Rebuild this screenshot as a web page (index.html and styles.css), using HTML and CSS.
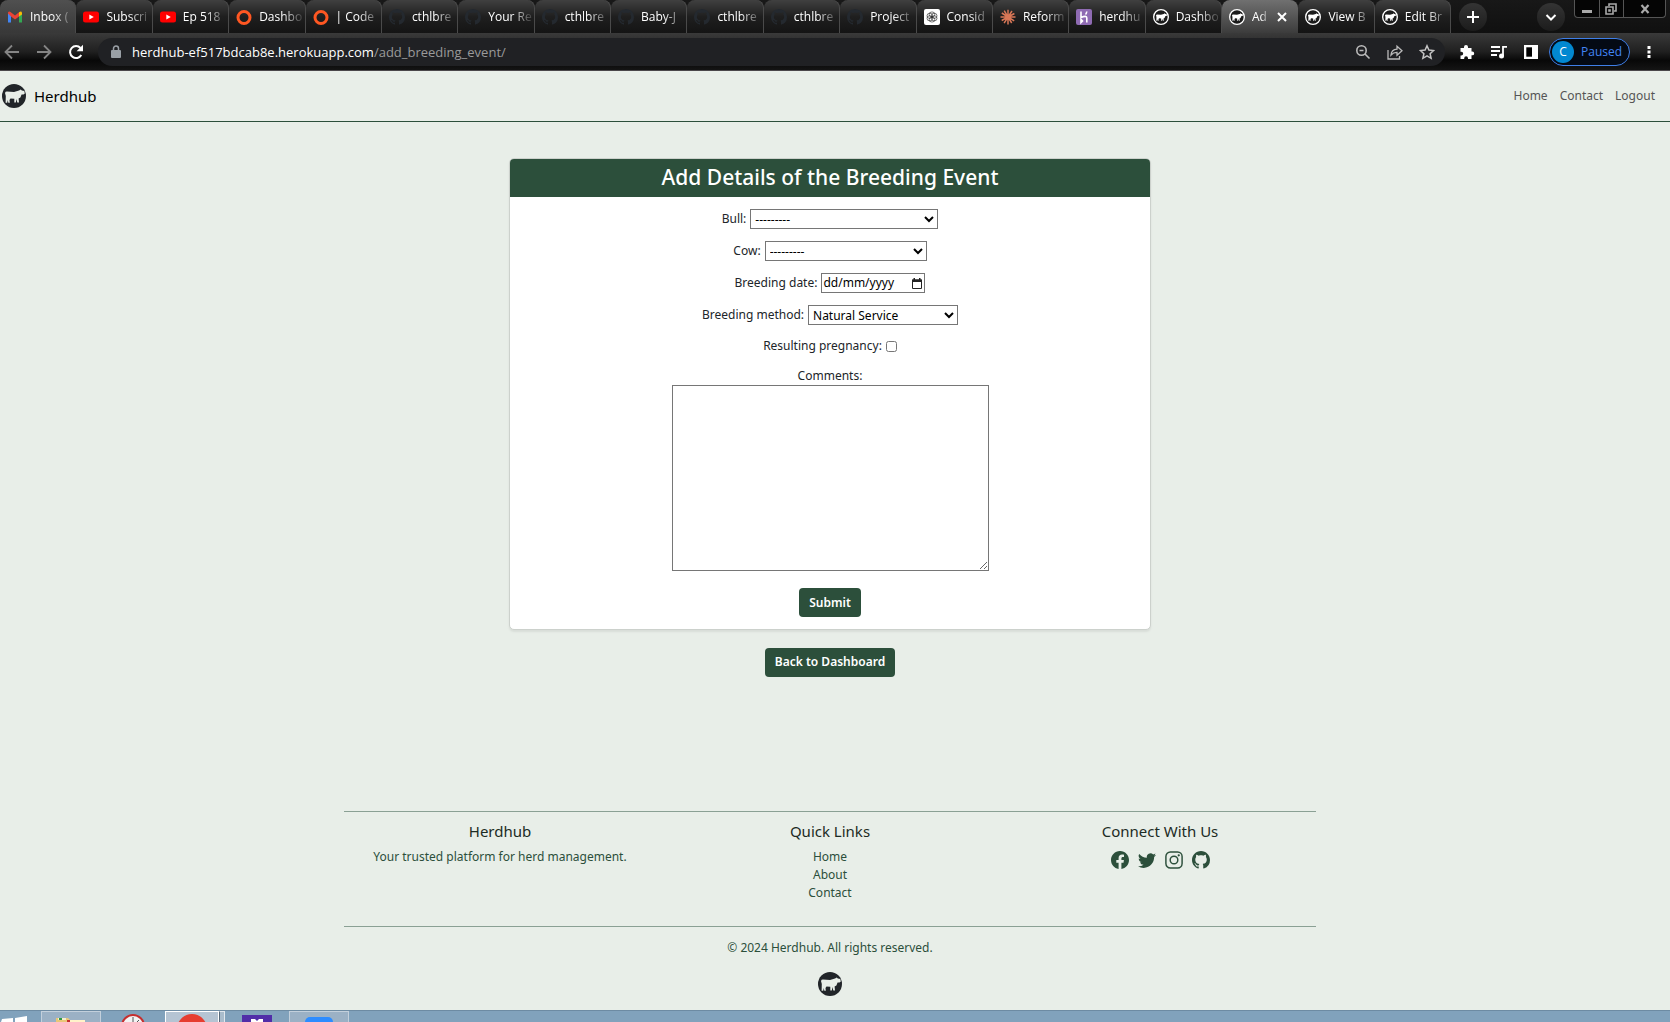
FILE: index.html
```html
<!DOCTYPE html>
<html lang="en-GB">
<head>
<meta charset="utf-8">
<meta name="viewport" content="width=device-width, initial-scale=1">
<title>Add Breeding Event</title>
<link rel="stylesheet" href="styles.css">
</head>
<body>
<svg class="sprite" aria-hidden="true">
  <symbol id="cow" viewBox="0 0 24 24"><path d="M3 9Q3.300 7.600 5 7.600L12 8 17 6.600 18.800 5.400 19.800 6.400 22.300 7 22.800 9.400 21.500 10.400 19.600 10.600 18.400 13.600 16.600 14.600 17 18.600H15.300L14.500 15 13.800 18.600H12.300V14.700L8.500 14.400 7.500 16 7.800 18.800H6.300L5.800 16 5.200 18.800H3.600L3.800 12Z"/></symbol>
  <symbol id="logo" viewBox="0 0 24 24"><circle cx="12" cy="12" r="12" fill="#212529"/><use href="#cow" fill="#e8eee8"/></symbol>
  <symbol id="tab-cow" viewBox="0 0 24 24"><circle cx="12" cy="12" r="11" fill="#1b1b1b" stroke="#fff" stroke-width="2"/><use href="#cow" x="2" y="2" width="20" height="20" fill="#fff"/></symbol>
  <symbol id="github" viewBox="0 0 16 16"><path d="M8 0C3.58 0 0 3.58 0 8c0 3.54 2.29 6.53 5.47 7.59.4.07.55-.17.55-.38 0-.19-.01-.82-.01-1.49-2.01.37-2.53-.49-2.69-.94-.09-.23-.48-.94-.82-1.13-.28-.15-.68-.52-.01-.53.63-.01 1.08.58 1.23.82.72 1.21 1.87.87 2.33.66.07-.52.28-.87.51-1.07-1.78-.2-3.64-.89-3.64-3.95 0-.87.31-1.59.82-2.15-.08-.2-.36-1.02.08-2.12 0 0 .67-.21 2.2.82.64-.18 1.32-.27 2-.27s1.36.09 2 .27c1.53-1.04 2.2-.82 2.2-.82.44 1.1.16 1.92.08 2.12.51.56.82 1.27.82 2.15 0 3.07-1.87 3.75-3.65 3.95.29.25.54.73.54 1.48 0 1.07-.01 1.93-.01 2.2 0 .21.15.46.55.38A8.01 8.01 0 0 0 16 8c0-4.42-3.58-8-8-8z"/></symbol>
  <symbol id="gmail" viewBox="0 0 16 16"><path d="M1 13.500V4l3 2v7.500z" fill="#4285f4"/><path d="M12 13.500V6l3-2v9.500z" fill="#34a853"/><path d="M1 4.500V3.500Q2 2 3.500 3L8 6.500 12 3.300V7.500L8 10.500 4 7.500z" fill="#ea4335"/><path d="M12 3.300Q14.500 1.500 15 4v1.500l-3 2z" fill="#fbbc04"/></symbol>
  <symbol id="youtube" viewBox="0 0 16 16"><rect y="2.500" width="16" height="11" rx="2.500" fill="#f00"/><path d="M6.300 5.500v5L10.800 8z" fill="#fff"/></symbol>
  <symbol id="ring" viewBox="0 0 16 16"><circle cx="8" cy="8.500" r="6" fill="none" stroke="#ff5722" stroke-width="3"/></symbol>
  <symbol id="gpt" viewBox="0 0 16 16"><rect width="16" height="16" rx="2" fill="#fff"/><g fill="none" stroke="#222" stroke-width=".6"><ellipse cx="8" cy="5.500" rx="2.800" ry="2.600"/><ellipse cx="10.200" cy="6.800" rx="2.800" ry="2.600"/><ellipse cx="10.200" cy="9.300" rx="2.800" ry="2.600"/><ellipse cx="8" cy="10.500" rx="2.800" ry="2.600"/><ellipse cx="5.800" cy="9.300" rx="2.800" ry="2.600"/><ellipse cx="5.800" cy="6.800" rx="2.800" ry="2.600"/></g></symbol>
  <symbol id="claude" viewBox="0 0 16 16"><path d="M8 8V.8M8 8V15.500M8 8H.5M8 8H15.500M8 8L4.200 1.700M8 8l4-6M8 8l6.400-3.500M8 8l6.200 3.800M8 8l3.700 6M8 8l-3.900 6.200M8 8l-6.300 3.500M8 8L1.800 4" stroke="#d97757" stroke-width="1.500"/></symbol>
  <symbol id="heroku" viewBox="0 0 16 16"><rect width="16" height="16" rx="2" fill="#8f6bb3"/><path d="M5 2.500V8.500Q10.800 6 10.800 9V13.500M10.800 2.500Q10.500 4.500 9.500 5.500M5 10.500v3l1.500-1.500z" fill="none" stroke="#fff" stroke-width="1.600"/></symbol>
</svg>

<header class="browser">
  <div class="tab-strip">
    <nav class="tabs" aria-label="Open tabs">
      <a class="tab tab-pinned" href="#"><svg class="favicon"><use href="#gmail"/></svg><span class="tab-title">Inbox (</span></a>
      <a class="tab" href="#"><svg class="favicon"><use href="#youtube"/></svg><span class="tab-title">Subscri</span></a>
      <a class="tab" href="#"><svg class="favicon"><use href="#youtube"/></svg><span class="tab-title">Ep 518</span></a>
      <a class="tab" href="#"><svg class="favicon"><use href="#ring"/></svg><span class="tab-title">Dashbo</span></a>
      <a class="tab" href="#"><svg class="favicon"><use href="#ring"/></svg><span class="tab-title">| Code</span></a>
      <a class="tab" href="#"><svg class="favicon favicon-dim"><use href="#github"/></svg><span class="tab-title">cthlbre</span></a>
      <a class="tab" href="#"><svg class="favicon favicon-dim"><use href="#github"/></svg><span class="tab-title">Your Re</span></a>
      <a class="tab" href="#"><svg class="favicon favicon-dim"><use href="#github"/></svg><span class="tab-title">cthlbre</span></a>
      <a class="tab" href="#"><svg class="favicon favicon-dim"><use href="#github"/></svg><span class="tab-title">Baby-J</span></a>
      <a class="tab" href="#"><svg class="favicon favicon-dim"><use href="#github"/></svg><span class="tab-title">cthlbre</span></a>
      <a class="tab" href="#"><svg class="favicon favicon-dim"><use href="#github"/></svg><span class="tab-title">cthlbre</span></a>
      <a class="tab" href="#"><svg class="favicon favicon-dim"><use href="#github"/></svg><span class="tab-title">Project</span></a>
      <a class="tab" href="#"><svg class="favicon"><use href="#gpt"/></svg><span class="tab-title">Consid</span></a>
      <a class="tab" href="#"><svg class="favicon"><use href="#claude"/></svg><span class="tab-title">Reform</span></a>
      <a class="tab" href="#"><svg class="favicon"><use href="#heroku"/></svg><span class="tab-title">herdhu</span></a>
      <a class="tab" href="#"><svg class="favicon"><use href="#tab-cow"/></svg><span class="tab-title">Dashbo</span></a>
      <a class="tab tab-active" href="#" aria-current="page"><svg class="favicon"><use href="#tab-cow"/></svg><span class="tab-title">Ad</span><svg class="tab-close" viewBox="0 0 10 10"><path d="M1 1l8 8M9 1L1 9" stroke="#fff" stroke-width="2"/></svg></a>
      <a class="tab" href="#"><svg class="favicon"><use href="#tab-cow"/></svg><span class="tab-title">View B</span></a>
      <a class="tab" href="#"><svg class="favicon"><use href="#tab-cow"/></svg><span class="tab-title">Edit Br</span></a>
    </nav>
    <div class="strip-tools">
      <button class="round-btn" aria-label="New tab"><svg width="12" height="12" viewBox="0 0 12 12"><path d="M6 0v12M0 6h12" stroke="#fff" stroke-width="2"/></svg></button>
      <button class="round-btn" aria-label="Search tabs"><svg width="12" height="12" viewBox="0 0 12 12"><path d="M1.500 4L6 8.500 10.500 4" fill="none" stroke="#fff" stroke-width="2"/></svg></button>
    </div>
    <div class="window-controls">
      <button class="win-btn" aria-label="Minimise"><svg width="12" height="12" viewBox="0 0 12 12"><path d="M1 8.500h10" stroke="#a9a9a9" stroke-width="3"/></svg></button>
      <button class="win-btn" aria-label="Restore"><svg width="12" height="12" viewBox="0 0 12 12"><path d="M4 3V1h7v7H9M1 4h7v7H1zM4 7h1v1H4z" fill="none" stroke="#a9a9a9" stroke-width="1.600"/></svg></button>
      <button class="win-btn win-close" aria-label="Close"><svg width="12" height="12" viewBox="0 0 12 12"><path d="M2.500 2l7 8M9.500 2l-7 8" stroke="#a9a9a9" stroke-width="2.200"/></svg></button>
    </div>
  </div>
  <div class="toolbar">
    <div class="nav-buttons">
      <button class="icon-btn" aria-label="Back"><svg width="16" height="16" viewBox="0 0 16 16"><path d="M15 8H2M8 1.500L1.500 8 8 14.500" fill="none" stroke="#858585" stroke-width="1.800"/></svg></button>
      <button class="icon-btn" aria-label="Forward"><svg width="16" height="16" viewBox="0 0 16 16"><path d="M1 8h13M8 1.500L14.500 8 8 14.500" fill="none" stroke="#858585" stroke-width="1.800"/></svg></button>
      <button class="icon-btn" aria-label="Reload"><svg width="16" height="16" viewBox="0 0 16 16"><path d="M13.300 11A6 6 0 1 1 12.500 4" fill="none" stroke="#fff" stroke-width="2"/><path d="M15 .8V7.200H8.600z" fill="#fff"/></svg></button>
    </div>
    <div class="omnibox">
      <svg width="10" height="14" viewBox="0 0 10 14"><path d="M1 5h8q1 0 1 1v6q0 1-1 1H1q-1 0-1-1V6q0-1 1-1z" fill="#9aa0a6"/><path d="M2.500 5.500V3.500a2.500 2.500 0 0 1 5 0v2" fill="none" stroke="#9aa0a6" stroke-width="1.500"/></svg>
      <span class="url">herdhub-ef517bdcab8e.herokuapp.com<span class="url-path">/add_breeding_event/</span></span>
      <button class="icon-btn" aria-label="Zoom"><svg width="16" height="16" viewBox="0 0 16 16"><circle cx="6.500" cy="6.500" r="4.700" fill="none" stroke="#bbb" stroke-width="1.600"/><path d="M10 10l4.500 4.500M4.500 6.500h4" stroke="#bbb" stroke-width="1.600"/></svg></button>
      <button class="icon-btn" aria-label="Share"><svg width="16" height="16" viewBox="0 0 16 16"><path d="M1 6v9h11.500v-3M4 11q.5-5.500 6-5.800V2.200L15 6.800 10 11.200V8.300Q6.500 8.200 4 11z" fill="none" stroke="#bbb" stroke-width="1.300"/></svg></button>
      <button class="icon-btn" aria-label="Bookmark"><svg width="16" height="16" viewBox="0 0 16 16"><path d="M8 1.800l1.900 4.300 4.700.5-3.500 3.100 1 4.600L8 11.900l-4.100 2.400 1-4.600L1.400 6.600l4.700-.5z" fill="none" stroke="#c4c4c4" stroke-width="1.500"/></svg></button>
    </div>
    <div class="tool-icons">
      <button class="icon-btn" aria-label="Extensions"><svg width="16" height="16" viewBox="0 0 16 16"><path d="M1.500 4H5V3a2 2 0 0 1 4 0v1h3.500v3.500h.8a1.900 1.900 0 0 1 0 3.800h-.8V15H9v-.8a1.900 1.900 0 0 0-3.800 0v.8H1.500v-3.500h.8a1.900 1.900 0 0 0 0-3.800h-.8z" fill="#fff"/></svg></button>
      <button class="icon-btn" aria-label="Media"><svg width="18" height="16" viewBox="0 0 18 16"><path d="M1 3h9M1 7h9M1 11h6M13 12V2.800h4" fill="none" stroke="#fff" stroke-width="1.800"/><circle cx="11.500" cy="12" r="2.500" fill="#fff"/></svg></button>
      <button class="icon-btn" aria-label="Side panel"><svg width="16" height="16" viewBox="0 0 16 16"><path d="M1 1h14v14H1z" fill="#fff"/><path d="M3.300 3.300H9v9.400H3.300z" fill="#000"/></svg></button>
    </div>
    <button class="profile"><span class="avatar">C</span>Paused</button>
    <button class="icon-btn" aria-label="Menu"><svg width="4" height="14" viewBox="0 0 4 14"><path d="M.5 1h3v3h-3zM.5 5.500h3v3h-3zM.5 10h3v3h-3z" fill="#fff"/></svg></button>
  </div>
</header>

<div class="page">
  <nav class="navbar">
    <a class="brand" href="#"><svg class="logo"><use href="#logo"/></svg>Herdhub</a>
    <div class="nav-links"><a href="#">Home</a><a href="#">Contact</a><a href="#">Logout</a></div>
  </nav>

  <main class="main">
    <section class="card">
      <h1 class="card-title">Add Details of the Breeding Event</h1>
      <form class="card-body">
        <div class="field"><label for="bull">Bull:</label><select class="control bull" id="bull"><option>---------</option></select></div>
        <div class="field"><label for="cow-select">Cow:</label><select class="control cow" id="cow-select"><option>---------</option></select></div>
        <div class="field"><label for="date">Breeding date:</label><span class="control date"><input id="date" type="text" placeholder="dd/mm/yyyy"><button class="date-btn" type="button" aria-label="Choose date"><svg width="10" height="11" viewBox="0 0 10 11"><path d="M.5 2h9v8.500h-9z" fill="none" stroke="#222"/><path d="M0 1.500h10V4H0zM1.500 0h1.500v2H1.500zM7 0h1.500v2H7z" fill="#222"/></svg></button></span></div>
        <div class="field"><label for="method">Breeding method:</label><select class="control method" id="method"><option>Natural Service</option></select></div>
        <div class="field field-check"><label for="pregnancy">Resulting pregnancy:</label><input class="check" id="pregnancy" type="checkbox"></div>
        <div class="field-area"><label for="comments">Comments:</label><textarea class="comments" id="comments"></textarea></div>
        <button class="btn" type="submit">Submit</button>
      </form>
    </section>
    <a class="btn" href="#">Back to Dashboard</a>
  </main>

  <footer class="footer">
    <div class="footer-cols">
      <section><h2>Herdhub</h2><p>Your trusted platform for herd management.</p></section>
      <section><h2>Quick Links</h2><ul><li><a href="#">Home</a></li><li><a href="#">About</a></li><li><a href="#">Contact</a></li></ul></section>
      <section><h2>Connect With Us</h2>
        <div class="social">
          <a href="#" aria-label="Facebook"><svg viewBox="0 0 16 16"><path d="M16 8.049c0-4.446-3.582-8.050-8-8.050C3.580 0-.002 3.603-.002 8.050c0 4.017 2.926 7.347 6.750 7.951v-5.625h-2.030V8.050H6.750V6.275c0-2.017 1.195-3.131 3.022-3.131.876 0 1.791.157 1.791.157v1.980h-1.009c-.993 0-1.303.621-1.303 1.258v1.510h2.218l-.354 2.326H9.250V16c3.824-.604 6.750-3.934 6.750-7.951z"/></svg></a>
          <a href="#" aria-label="Twitter"><svg viewBox="0 0 16 16"><path d="M5.026 15c6.038 0 9.341-5.003 9.341-9.334 0-.14 0-.282-.006-.422A6.685 6.685 0 0 0 16 3.542a6.658 6.658 0 0 1-1.889.518 3.301 3.301 0 0 0 1.447-1.817 6.533 6.533 0 0 1-2.087.793A3.286 3.286 0 0 0 7.875 6.030a9.325 9.325 0 0 1-6.767-3.429 3.289 3.289 0 0 0 1.018 4.382A3.323 3.323 0 0 1 .64 6.575v.045a3.288 3.288 0 0 0 2.632 3.218 3.203 3.203 0 0 1-.865.115 3.230 3.230 0 0 1-.614-.057 3.283 3.283 0 0 0 3.067 2.277A6.588 6.588 0 0 1 .78 13.580a6.320 6.320 0 0 1-.78-.045A9.344 9.344 0 0 0 5.026 15z"/></svg></a>
          <a href="#" aria-label="Instagram"><svg viewBox="0 0 16 16"><rect x=".8" y=".8" width="14.400" height="14.400" rx="4" fill="none" stroke="#2c4f3b" stroke-width="1.300"/><circle cx="8" cy="8" r="3.400" fill="none" stroke="#2c4f3b" stroke-width="1.300"/><circle cx="12.200" cy="3.800" r="1"/></svg></a>
          <a href="#" aria-label="GitHub"><svg><use href="#github"/></svg></a>
        </div>
      </section>
    </div>
    <p class="copyright">© 2024 Herdhub. All rights reserved.</p>
    <svg class="logo"><use href="#logo"/></svg>
  </footer>
</div>

<div class="taskbar">
  <button class="task task-start" aria-label="Start"><svg width="41" height="12"><path d="M1 12l1-3 11-1v4zM15 12V8l12-2v6z" fill="#fff"/></svg></button>
  <button class="task task-open" aria-label="Files"><svg width="32" height="12"><path d="M1 12V7h12l2 2h15v3z" fill="#e9c778"/><path d="M3 7h8v2H3z" fill="#f7eed0"/><path d="M4 7h3v2H4z" fill="#2f9b46"/><path d="M12 9h18v2H12z" fill="#fff3c9"/><path d="M12 9h3v2h-3z" fill="#c9302c"/></svg></button>
  <button class="task task-clock" aria-label="Clock"><svg width="26" height="12"><circle cx="13" cy="16" r="11" fill="#f3f3f3" stroke="#c62f2f" stroke-width="2"/><path d="M13 16V7M13 16l6-6" stroke="#555"/></svg></button>
  <button class="task task-open task-current" aria-label="Browser"><svg width="32" height="12"><circle cx="16" cy="18" r="15" fill="#e63d30"/></svg></button>
  <span class="task-stack"></span>
  <button class="task task-purple" aria-label="Editor"><svg width="30" height="12"><path d="M0 5h30v7H0z" fill="#512da8"/><path d="M9 9h4l2 2 2-2h4v3H9z" fill="#fff"/></svg></button>
  <button class="task task-open" aria-label="Video call"><svg width="28" height="12"><rect y="6" width="28" height="20" rx="5" fill="#2d8cff"/></svg></button>
</div>
</body>
</html>
```
FILE: styles.css
```css
* { box-sizing: border-box; }

body {
  display: flex;
  flex-direction: column;
  min-height: 100vh;
  margin: 0;
  background: #e8eee8;
  color: #212529;
  font: 12px/18px "Noto Sans", "Open Sans", sans-serif;
}

a { color: inherit; text-decoration: none; }
button { padding: 0; border: 0; background: none; color: inherit; font: inherit; }
svg { display: block; flex: none; }
h1, h2, p, ul { margin: 0; padding: 0; font-weight: 400; }
ul { list-style: none; }
.sprite { position: absolute; width: 0; height: 0; }

/* Browser chrome */
.browser { color: #fff; font-family: "Open Sans", sans-serif; background: #141414; }
.tab-strip { display: flex; height: 33px; background: linear-gradient(#181818, #101010); }
.tabs { display: flex; flex: 1; min-width: 0; }
.tab {
  display: flex;
  flex: 1 1 0;
  align-items: center;
  gap: 7px;
  min-width: 0;
  padding: 1px 1px 0 7px;
  border-radius: 8px 8px 0 0;
  background: linear-gradient(#404040, #1f1f1f 50%, #141414);
  box-shadow: inset -1px 0 #4a4a4a;
}
.tab-pinned { background: linear-gradient(#505050, #383838); }
.tab-active { background: linear-gradient(#707070, #3c3c3c); box-shadow: none; }
.favicon { width: 16px; height: 16px; }
.favicon-dim { fill: #24292f; }
.tab-title {
  flex: 1;
  min-width: 0;
  overflow: hidden;
  white-space: nowrap;
  mask-image: linear-gradient(90deg, #000 50%, #0003 90%);
}
.tab-close { width: 10px; height: 10px; margin-right: 10px; }
.strip-tools { display: flex; align-items: center; gap: 50px; padding: 0 9px 0 8px; }
.round-btn {
  display: grid;
  place-items: center;
  width: 28px;
  height: 28px;
  border-radius: 50%;
  background: linear-gradient(#343434, #1c1c1c);
}
.window-controls {
  display: flex;
  width: 92px;
  height: 18px;
  margin-right: 4px;
  border: 1px solid #555;
  border-top: 0;
  border-radius: 0 0 4px 4px;
  background: #050505;
}
.win-btn { display: grid; flex: 1; place-items: center; border-right: 1px solid #555; }
.win-close { flex: 0 0 41px; border-right: 0; }

.toolbar {
  display: flex;
  align-items: center;
  height: 38px;
  padding: 0 19px 0 4px;
  border-bottom: 1px solid #4a474a;
  background: linear-gradient(#3a3a3a, #202020 50%, #080808 74%, #141414);
}
.nav-buttons { display: flex; gap: 16px; margin-right: 14px; }
.icon-btn { display: grid; flex: none; place-items: center; }
.omnibox {
  display: flex;
  flex: 1;
  align-items: center;
  gap: 16px;
  height: 28px;
  padding: 0 10px 0 13px;
  border-radius: 14px;
  background: #202124;
}
.url { flex: 1; margin-left: -5px; font-size: 13px; }
.url-path { color: #9a9a9a; }
.tool-icons { display: flex; gap: 15px; margin: 0 10px 0 14px; }
.profile {
  display: flex;
  align-items: center;
  gap: 7px;
  width: 81px;
  height: 28px;
  margin-right: 17px;
  padding-left: 2px;
  border: 1px solid #3f7fe8;
  border-radius: 14px;
  background: #040a14;
  color: #4285f4;
}
.avatar { width: 22px; height: 22px; border-radius: 50%; background: #0288d1; color: #fff; line-height: 22px; }

/* Site */
.page { display: flex; flex: 1; flex-direction: column; }
.navbar {
  display: flex;
  align-items: center;
  justify-content: space-between;
  height: 51px;
  padding: 0 15px 0 2px;
  border-bottom: 1px solid #2c4f3b;
}
.brand { display: flex; align-items: center; gap: 8px; color: #000; font-size: 15px; }
.logo { width: 24px; height: 24px; }
.nav-links { display: flex; gap: 12px; color: #555; }

.main {
  display: flex;
  flex: 1;
  flex-direction: column;
  align-items: center;
  gap: 18px;
  padding: 36px 10px 40px 0;
}
.card {
  width: 100%;
  max-width: 642px;
  border: 1px solid #ccd1cc;
  border-radius: 5px;
  background: #fff;
  box-shadow: 0 2px 2px #d8ddd8;
}
.card-title {
  height: 38px;
  border-radius: 4px 4px 0 0;
  background: #2c4f3b;
  color: #fff;
  font-size: 21px;
  font-weight: 500;
  line-height: 36px;
  text-align: center;
}
.card-body { display: flex; flex-direction: column; align-items: center; gap: 12px; padding: 12px; }
.field { display: flex; align-items: center; gap: 4px; height: 20px; }
.field-check { height: 18px; }
.control {
  height: 20px;
  padding: 0;
  border: 1px solid #767676;
  border-radius: 0;
  background: #fff;
  color: #000;
  font: inherit;
}
.bull { width: 188px; }
.cow { width: 162px; }
.method { width: 150px; }
.date { display: flex; align-items: center; width: 104px; padding: 0 2px 0 1px; }
.date input { flex: 1; width: 100%; min-width: 0; padding: 0; border: 0; background: none; font: inherit; }
.date input::placeholder { color: #000; }
.check { width: 11px; height: 11px; margin: 0; }
.field-area { display: flex; flex-direction: column; align-items: center; margin-bottom: 5px; }
.comments { width: 317px; height: 186px; border: 1px solid #767676; font: inherit; }
.btn {
  height: 29px;
  padding: 0 10px;
  border-radius: 4px;
  background: #2c4f3b;
  color: #fff;
  font-weight: 600;
  line-height: 28px;
}

.footer { display: flex; flex-direction: column; align-items: center; padding: 0 10px 14px 0; color: #2c4f3b; text-align: center; }
.footer-cols {
  display: grid;
  grid-template-columns: repeat(3, 330px);
  justify-content: center;
  width: 100%;
  max-width: 972px;
  padding: 9px 0 24px;
  border: solid #8aa094;
  border-width: 1px 0;
}
.footer h2 { margin-bottom: 7px; color: #1c2b24; font-size: 15px; line-height: 20px; }
.social { display: flex; justify-content: center; gap: 9px; padding-top: 3px; }
.social svg { width: 18px; height: 18px; fill: #2c4f3b; }
.copyright { padding: 12px 0 15px; }

/* Desktop taskbar, only its top edge is in view */
.taskbar { display: flex; height: 12px; overflow: hidden; border-top: 1px solid #6d8ba3; background: #81a2bc; }
.task { display: flex; justify-content: center; height: 12px; }
.task svg { margin-top: -1px; }
.task-open { width: 60px; border: 1px solid #c3d0dc; border-bottom: 0; background: #9bb1c5; }
.task-clock, .task-purple { width: 64px; }
.task-current { width: 54px; border-color: #fff; background: #b5c4d3; }
.task-stack { width: 6px; height: 12px; border: 1px solid #e1e8ee; border-left-color: #56697a; background: #a9bccc; }
```
